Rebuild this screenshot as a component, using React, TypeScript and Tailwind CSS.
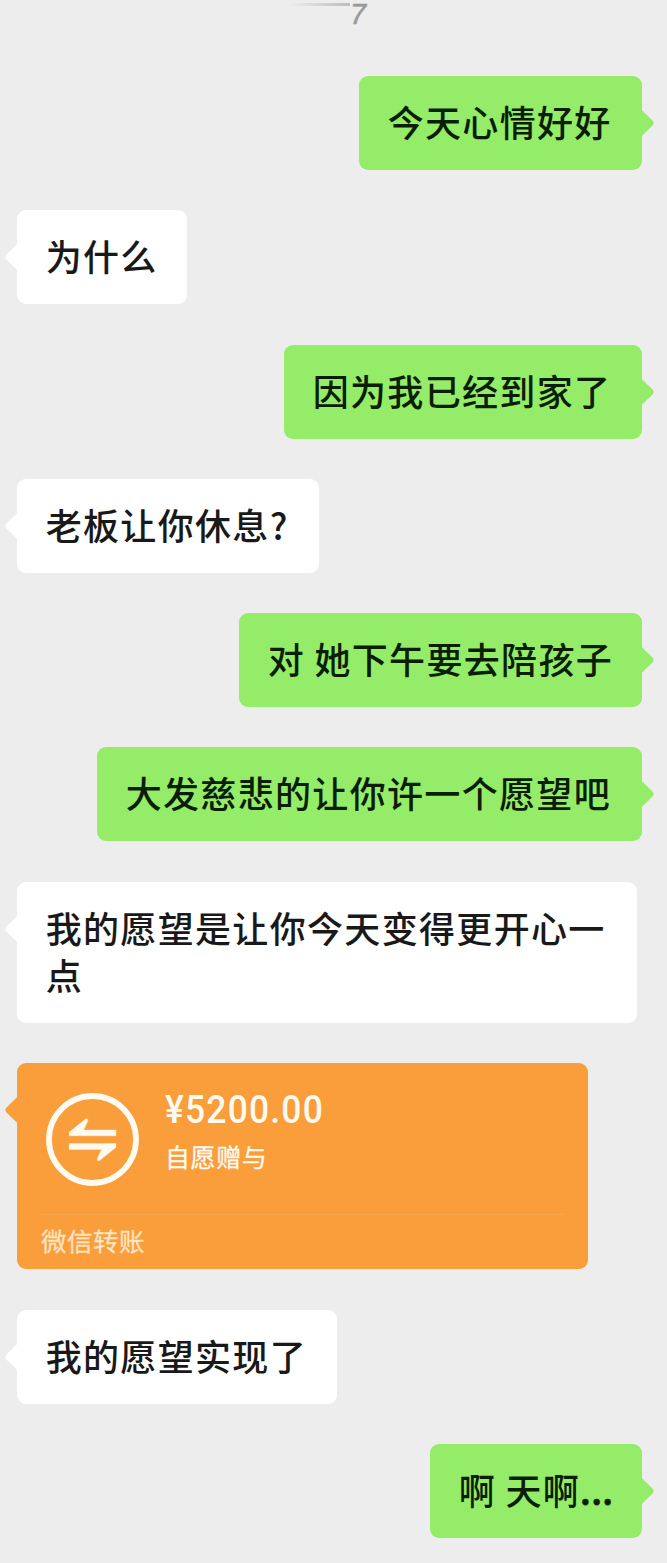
import type { ReactNode } from "react";

type Side = "left" | "right";

function Tail({ side, color }: { side: Side; color: string }) {
  return (
    <svg
      className={
        side === "right"
          ? "absolute top-[33px] -right-[12px] h-[28px] w-[13px]"
          : "absolute top-[33px] -left-[12px] h-[28px] w-[13px] -scale-x-100"
      }
      viewBox="0 0 13 28"
    >
      <path d="M0 .5 1 1.2 11.5 11.6Q13.8 14 11.5 16.4L1 26.8 0 27.5Z" fill={color} />
    </svg>
  );
}

function Row({ side, children }: { side: Side; children: ReactNode }) {
  return (
    <div className={side === "right" ? "flex justify-end pr-[25px]" : "flex justify-start pl-[17px]"}>
      {children}
    </div>
  );
}

function Message({ side, width, children }: { side: Side; width: string; children: ReactNode }) {
  const tone = side === "right" ? "bg-[#95ec69] text-[#0a1e04]" : "bg-white text-[#191919]";
  return (
    <Row side={side}>
      <div
        className={`relative rounded-[9px] pt-[22px] pb-[25px] pl-[28.7px] text-[36px] leading-[47px] font-medium tracking-[1.33px] ${tone} ${width}`}
      >
        <Tail side={side} color={side === "right" ? "#95ec69" : "#ffffff"} />
        {children}
      </div>
    </Row>
  );
}

function TransferCard() {
  return (
    <Row side="left">
      <div className="relative h-[205.5px] w-[571px] rounded-[9px] bg-[#fa9d3b] text-[#fffaf0]">
        <Tail side="left" color="#fa9d3b" />
        <div className="flex h-[151px] pl-[29px]">
          <svg className="mt-[29.5px] h-[93px] w-[93px] shrink-0" viewBox="0 0 93 93" fill="none">
            <circle cx="46.5" cy="46.5" r="43.5" stroke="#fffaf0" strokeWidth="5.8" />
            <path
              d="M70 37V42.8H23.2V39.2L39.3 26.2Q42 24.6 42 27.6L37.6 37ZM23.2 50.6H70V54.2L53.9 67.2Q51.2 68.8 51.2 65.8L55.6 56.4H23.2Z"
              fill="#fffaf0"
              stroke="#fffaf0"
              strokeWidth="0.4"
            />
          </svg>
          <div className="flex flex-col pt-[24px] pl-[26px]">
            <div className="origin-left scale-x-[0.92] font-['Roboto','Noto_Sans_CJK_SC',sans-serif] text-[38.5px] leading-[46px] font-medium tracking-[1.3px]">
              ¥5200.00
            </div>
            <div className="mt-[5px] text-[25px] leading-[36px] tracking-[0.6px] [-webkit-text-stroke:0.3px_#fffaf0]">
              自愿赠与
            </div>
          </div>
        </div>
        <div className="mx-[23px] border-t border-[#fba54b] pt-[7px] pl-[1px] text-[25.5px] leading-[36px] tracking-[0.5px] text-[#fee4c2] [-webkit-text-stroke:0.3px_#fee4c2]">
          微信转账
        </div>
      </div>
    </Row>
  );
}

export default function App() {
  return (
    <main className="h-[1563px] w-[667px] overflow-hidden bg-[#ededed] font-['Noto_Sans_CJK_SC',sans-serif]">
      <div className="flex h-[76px] items-start pl-[290px]">
        <div className="mt-[3px] h-[3px] w-[60px] bg-linear-to-r from-[#ededed] to-[#bdbdbd]" />
        <div className="font-['Liberation_Sans',sans-serif] text-[29px] leading-[29px] text-[#999999] italic [-webkit-text-stroke:0.5px_#999999]">
          7
        </div>
      </div>
      <div className="flex flex-col gap-[40.3px]">
        <Message side="right" width="w-[283px]">今天心情好好</Message>
        <Message side="left" width="w-[170px]">为什么</Message>
        <Message side="right" width="w-[358px]">因为我已经到家了</Message>
        <Message side="left" width="w-[302px]">老板让你休息?</Message>
        <Message side="right" width="w-[403px]">对 她下午要去陪孩子</Message>
        <Message side="right" width="w-[545px]">大发慈悲的让你许一个愿望吧</Message>
        <Message side="left" width="w-[620px]">我的愿望是让你今天变得更开心一点</Message>
        <TransferCard />
        <div className="pt-[1px]">
          <Message side="left" width="w-[320px]">我的愿望实现了</Message>
        </div>
        <Message side="right" width="w-[212px]">
          啊 天啊<span className="tracking-[0.3px] [-webkit-text-stroke:0.8px_#0a1e04]">...</span>
        </Message>
      </div>
    </main>
  );
}
